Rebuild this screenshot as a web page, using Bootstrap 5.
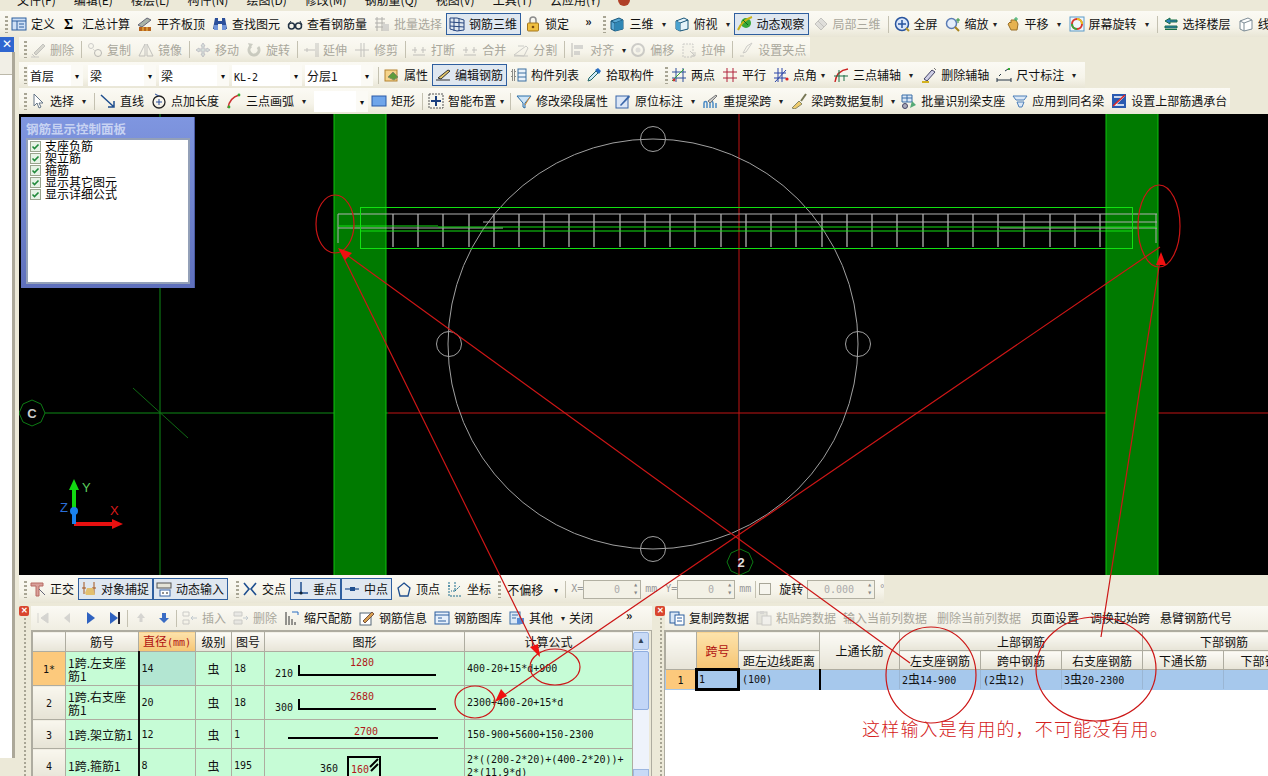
<!DOCTYPE html>
<html lang="zh"><head><meta charset="utf-8"><title>钢筋三维</title>
<link rel="stylesheet" href="https://cdn.jsdelivr.net/npm/bootstrap@5.3.0/dist/css/bootstrap.min.css">
<style>
html,body{margin:0;height:776px;overflow:hidden}
body{background:#ece9d8;font:12px/14px "Noto Sans CJK SC","Liberation Sans",sans-serif;color:#111}
.shell{width:1268px;height:776px;position:relative;overflow:hidden;background:#ece9d8}
.la{font-family:"DejaVu Sans Mono",monospace;font-size:10px}
.ph{font-size:12px;font-family:"Noto Sans CJK SC",sans-serif}
.menustrip{height:11px;overflow:hidden;white-space:nowrap;padding-left:17px;line-height:12px}
.menustrip span{display:inline-block;margin-top:-6px;margin-right:18px;vertical-align:top}
.menustrip .mdot{width:12px;height:12px;border-radius:50%;background:#b04028;margin-right:0}
.tbar{display:flex;align-items:center;white-space:nowrap;background:linear-gradient(#fbfaf4,#f6f4ea 60%,#e9e6d6);height:25px;overflow:hidden}
.t1{height:26px;padding-left:5px}
.t2{width:791px;padding-left:5px}
.t3{width:1066px;height:26px;padding-left:5px}
.t4{width:1211px;height:26px;padding-left:5px}
.t5{width:865px;height:28px;padding-left:5px}
.grip{width:3px;height:17px;margin-right:3px;flex:none;background:repeating-linear-gradient(#a8a594 0 2px,transparent 2px 4px)}
.t3>.grip:first-child{margin-right:1px}
.tl{display:flex;align-items:center;gap:4px;margin-right:7px;height:22px;flex:none}
.tl svg{width:16px;height:16px;flex:none}
.off{color:#a9a79c}
.off svg{opacity:.55}
.on{border:1px solid #2f5f9f;background:#dfe7f0;padding:0 3px 0 2px;margin-right:0}
.car{font-size:8px;width:12px;text-align:center;margin-left:-4px;margin-right:4px;flex:none;color:#222}
.t2 .car{margin-right:0}
.m2{margin-right:2px}
.sepv{width:1px;height:17px;background:#c4c1b1;margin:0 5px 0 0;flex:none}
.fld{background:#fff;height:21px;line-height:21px;padding-left:2px;width:58px;flex:none}
.w43{width:43px}.w56{width:56px}.w42{width:42px}.w46{width:46px;background:none;padding-left:3px}
.fldcar{width:12px;height:21px;line-height:21px;font-size:8px;text-align:center;flex:none;margin-right:3px;background:#fbfaf5}
.fldcar.m5{margin-right:5px}
.fldcar.clr{background:none}
.more{font-weight:700;font-size:12px;margin:-6px 12px 0 16px;flex:none}
.body-row{display:flex;height:739px}
.lcol{width:19px;flex:none}
.lclose{width:14px;height:15px;background:#2f66d0;color:#fff;font:12px/14px "Liberation Sans",sans-serif;text-align:center}
.lpane{width:15px;height:706px;background:#fff;border-right:3px solid #aca899}
.lpane div{height:23px;background:#f1efe6;border-bottom:1px solid #bcb9aa}
.rcol{width:1249px;flex:none}
.cad{height:461px;background:#000;position:relative;overflow:hidden}
.cad>svg{display:block}
.ctrl{position:absolute;left:2px;top:3px;width:174px;height:171px;background:linear-gradient(#7f96e0,#5f70bc);padding:5px 4px 4px 5px;border-right:1px solid #4a5aa4}
.ctrl h6{margin:0 0 2px;font:700 12.5px/14px "Noto Sans CJK SC",sans-serif;color:#c7d2f2;height:14px}
.ctrlbox{background:#fff;border:2px solid #93a0b8;height:146px;padding:0 0 0 2px}
.ckr{display:flex;align-items:center;gap:4px;height:12px;line-height:12px;color:#000}
.ckr svg{width:11px;height:11px;flex:none}
.spin{border:1px solid #b2b0a2;background:#f3f1e6;height:19px;width:58px;color:#aaa;text-align:right;padding-right:20px;line-height:17px;flex:none;font-family:"DejaVu Sans Mono",monospace;font-size:10px;position:relative}
.spin.wide{width:68px}
.spin::after{content:"▴\A▾";position:absolute;right:2px;top:0;font-size:8px;width:9px;line-height:8px;color:#888;white-space:pre}
.unit{font-family:"DejaVu Sans Mono",monospace;font-size:10px;width:12px;color:#999;flex:none}
.cbx{width:12px;height:12px;border:1px solid #a8a698;background:#f6f5ee;flex:none}
.sm3{margin-right:3px}
.lower{display:flex;height:173px;overflow:hidden}
.pnl{display:flex;flex:none;padding-top:3px}
.pl{width:633px}.pr{width:616px}
.gut{flex:none;position:relative}
.gl{width:12px}.gr{width:13px;padding-left:3px}
.gut i{display:block;width:10px;height:10px;background:#d9452f;border-radius:2px;color:#fff;font:700 8px/10px "Liberation Sans",sans-serif;text-align:center}
.gut b{display:block;width:2px;height:160px;margin:2px 0 0 5px;background:repeating-linear-gradient(#a8a594 0 2px,transparent 2px 4px)}
.pb{flex:1;min-width:0}
.ptb{height:24px;display:flex;align-items:center;white-space:nowrap;background:linear-gradient(#fbfaf4,#f0eee2);overflow:hidden}
.ptb .car{margin-right:0}
.ptb .more{margin-left:33px}
.ptb .m11{margin-right:11px}
.ptb .m9{margin-right:10px}
.grid{border-collapse:collapse;table-layout:fixed;margin:0;background:#fff;--bs-table-bg:transparent}
.grid th,.grid td{border:1px solid #aeaca0;padding:0 2px;font-weight:400;overflow:hidden;line-height:13px;vertical-align:middle}
.grid thead th{background:linear-gradient(#fcfbf6,#e7e4d7);text-align:center;color:#111}
.grid thead th.hot{background:linear-gradient(#fde3ac,#f6c574);color:#b01010}
.grid .rn{background:linear-gradient(#f9f7ee,#e6e3d5);text-align:center}
.grid .rn.hot{background:#fcc97c}
.lt{width:600px}
.lt td{background:#c6fcd6;color:#111}
.lt td.c{text-align:center}
.lt td.cur{background:#b3e6d2}
.lt td.bk{border-left:2px solid #111}
.lt .h20{height:20px}.lt .h34{height:34px}.lt .h29{height:29px}
.c31{width:31px}.c33{width:33px}.c36{width:36px}.c42{width:42px}.c57{width:57px}.c73{width:73px}.c80{width:80px}.c81{width:81px}.c82{width:82px}.c168{width:168px}.c200{width:200px}
.leftwrap{display:flex;height:147px;border:1px solid #aeaca0;border-bottom:0}
.sbar{width:16px;flex:none;background:#eef3fb;display:flex;flex-direction:column;gap:1px;padding:1px 0 0;position:relative}
.sbar i{display:block;height:18px;background:#c8daf6;border:1px solid #9db7e0;border-radius:2px;color:#345;font:normal 8px/16px "Liberation Sans",sans-serif;text-align:center}
.sbar u{display:block;height:59px;background:#c2d6f7;border:1px solid #8fadde;border-radius:2px}
.sbar em{position:absolute;bottom:0;left:0;width:16px;height:8px;background:#c8daf6;border:1px solid #9db7e0}
.rightwrap{height:147px;margin-left:-1px;border-left:1px solid #aeaca0;border-top:1px solid #aeaca0;overflow:hidden;background:#fff}
.rt{width:640px}
.rt td{background:#a6c8ec;height:20px;border-color:#a6c8ec;border-right-color:#9ab6d4;line-height:14px;white-space:nowrap}
.rt td.sel{border:3px solid #000;padding:0 1px}
.rt td.edge{border-right:2px solid #000}
.rt th{height:19px}
.over{position:absolute;left:0;top:0;pointer-events:none}
.redmsg{position:absolute;left:862px;top:718px;color:#d42020;font-size:18px;line-height:20px;letter-spacing:1.2px;white-space:nowrap;font-weight:300}
.dsvg{display:block}
.dsvg text{font-family:"DejaVu Sans Mono",monospace;font-size:10px;fill:#111}
.dsvg text.rd{fill:#b01818;text-anchor:middle}
</style></head><body>
<svg width="0" height="0" class="position-absolute"><defs>
<symbol id="def" viewBox="0 0 16 16"><rect x="1" y="2" width="14" height="12" fill="#cfe0f5" stroke="#2d5f9e"/><path d="M1 5h14M6 5v9M8 8h5M8 11h5" stroke="#2d5f9e" fill="none"/></symbol>
<symbol id="lev" viewBox="0 0 16 16"><path d="M1 9l9-7 4 2-9 7z" fill="#a9b4a8" stroke="#667"/><rect x="2" y="11" width="12" height="4" fill="#b8641c"/><path d="M6 11v4M10 11v4" stroke="#f4c64a"/></symbol>
<symbol id="bin" viewBox="0 0 16 16"><path d="M3 2h3v3h4V2h3l2 11h-5V8H6v5H1z" fill="#2b4f9a"/><rect x="2" y="9" width="4" height="5" fill="#6f93d8"/><rect x="10" y="9" width="4" height="5" fill="#6f93d8"/></symbol>
<symbol id="gls" viewBox="0 0 16 16"><circle cx="4.5" cy="10" r="3" fill="none" stroke="#234" stroke-width="1.5"/><circle cx="11.5" cy="10" r="3" fill="none" stroke="#234" stroke-width="1.5"/><path d="M1 9l3-4M7 10h2M15 9l-2-4" stroke="#234"/></symbol>
<symbol id="bat" viewBox="0 0 16 16"><path d="M1 3h10M1 7h10M1 11h10M3 1v14M8 1v14" stroke="#777" fill="none"/><rect x="9" y="8" width="6" height="7" fill="#bbb"/></symbol>
<symbol id="r3d" viewBox="0 0 16 16"><path d="M1 2l7 0 7 2v10l-7 1-7-2zM1 6l14 1M1 10l14 1M5 2v13M10 3v12" fill="none" stroke="#26457f"/></symbol>
<symbol id="lck" viewBox="0 0 16 16"><path d="M5 7V4a3 3 0 016 0v3" fill="none" stroke="#8c8c8c" stroke-width="1.5"/><rect x="2.500" y="7" width="11" height="8" rx="1" fill="#f0c040" stroke="#a4761a"/><circle cx="8" cy="11" r="1.300" fill="#7a4a10"/></symbol>
<symbol id="cub" viewBox="0 0 16 16"><path d="M2 5l8-3 4 2v9l-8 2-4-2z" fill="#58a8d4" stroke="#165478"/><path d="M2 5l4 2v8M6 7l8-3" fill="none" stroke="#165478"/><path d="M6 7l8-3v9l-8 2z" fill="#2f86b4"/></symbol>
<symbol id="cb2" viewBox="0 0 16 16"><path d="M2 5l8-3 4 2v9l-8 2-4-2z" fill="#e4f3fa" stroke="#165478"/><path d="M2 5l4 2v8M6 7l8-3" fill="none" stroke="#165478"/><path d="M2 5l4 2v8l-4-2z" fill="#4aa2cf"/></symbol>
<symbol id="orb" viewBox="0 0 16 16"><ellipse cx="9" cy="7" rx="5" ry="5" fill="#38a838"/><path d="M1 14C4 7 9 3 15 1" stroke="#c8b418" stroke-width="2" fill="none"/><path d="M6 4l5 5" stroke="#0c6a18"/></symbol>
<symbol id="dia" viewBox="0 0 16 16"><path d="M8 2l6 6-6 6-6-6z" fill="#ccc" stroke="#999"/><path d="M5 5l6 6" stroke="#999"/></symbol>
<symbol id="ful" viewBox="0 0 16 16"><circle cx="8" cy="8" r="6.500" fill="#dbe7fa" stroke="#29549e" stroke-width="1.500"/><path d="M8 4v8M4 8h8" stroke="#29549e" stroke-width="1.500"/><path d="M12 12l3 3" stroke="#b8962a" stroke-width="2"/></symbol>
<symbol id="zom" viewBox="0 0 16 16"><circle cx="6.500" cy="7.500" r="5" fill="#e4eefb" stroke="#5c7cb4" stroke-width="1.500"/><path d="M10 11l4 4" stroke="#a8841c" stroke-width="2"/><path d="M13 2v5M11 4h4" stroke="#2c8c3c"/></symbol>
<symbol id="pan" viewBox="0 0 16 16"><path d="M3 8l2-2 1 1V4h5l2 4-1 6H6z" fill="#e6b250" stroke="#99702a"/><path d="M11 1v4M9 3h4" stroke="#3a6"/></symbol>
<symbol id="rot" viewBox="0 0 16 16"><rect x="1" y="1" width="14" height="14" fill="#eef6fb" stroke="#5b9ac7"/><circle cx="8" cy="8" r="5" fill="none" stroke="#d8352a" stroke-width="2"/><path d="M3 8a5 5 0 005 5" stroke="#38a83c" stroke-width="2" fill="none"/><path d="M8 3a5 5 0 015 5" stroke="#e8c020" stroke-width="2" fill="none"/></symbol>
<symbol id="flr" viewBox="0 0 16 16"><path d="M2 5l5-3v2h7v2H7v2zM2 10h12v2H2zM2 13.500h12" stroke="#1a6f46" fill="#2d7fbf"/></symbol>
<symbol id="wir" viewBox="0 0 16 16"><path d="M2 5l8-3 4 2v9l-8 2-4-2zM2 5l4 2v8M6 7l8-3" fill="#fff" stroke="#7d8c96"/></symbol>
<symbol id="dlx" viewBox="0 0 16 16"><path d="M4 11L13 2l2 2-9 9z" fill="#bdbdb5" stroke="#999"/><path d="M1 15h8M2 12l3 3" stroke="#aaa"/></symbol>
<symbol id="cpy" viewBox="0 0 16 16"><circle cx="4" cy="4" r="2.500" fill="none" stroke="#aaa"/><circle cx="11" cy="11" r="3.500" fill="none" stroke="#888"/><path d="M6 7l2 2" stroke="#aaa" stroke-dasharray="1 1"/></symbol>
<symbol id="mir" viewBox="0 0 16 16"><path d="M7 2L1 14h6zM9 2l6 12H9z" fill="none" stroke="#999"/></symbol>
<symbol id="mov" viewBox="0 0 16 16"><path d="M8 1l2 3H9v3h3V6l3 2-3 2V9H9v3h1l-2 3-2-3h1V9H4v1L1 8l3-2v1h3V4H6z" fill="#bcc" stroke="#99a"/></symbol>
<symbol id="rtt" viewBox="0 0 16 16"><path d="M12 5a5 5 0 11-7-1" fill="none" stroke="#a8aba0" stroke-width="3"/><path d="M2 1l5 1-3 4z" fill="#a8aba0"/></symbol>
<symbol id="ext" viewBox="0 0 16 16"><path d="M1 8h11M4 6v4M13 1v14M15 1v14" fill="none" stroke="#999"/></symbol>
<symbol id="trm" viewBox="0 0 16 16"><path d="M1 8h14M7 1v14M10 1v14" fill="none" stroke="#999"/></symbol>
<symbol id="brk" viewBox="0 0 16 16"><path d="M1 8h5M10 8h5M4 5v6M12 5v6M2 13h12" fill="none" stroke="#999"/></symbol>
<symbol id="spl" viewBox="0 0 16 16"><path d="M1 13L13 4l2 2-4 8zM5 4h6M1 14h14" fill="none" stroke="#aaa"/></symbol>
<symbol id="aln" viewBox="0 0 16 16"><path d="M2 1v14" stroke="#888"/><rect x="4" y="3" width="9" height="4" fill="#bbb"/><rect x="4" y="9" width="6" height="4" fill="#bbb"/></symbol>
<symbol id="ofs" viewBox="0 0 16 16"><circle cx="8" cy="8" r="6" fill="none" stroke="#aaa" stroke-width="2"/><circle cx="8" cy="8" r="2.500" fill="#ccc"/></symbol>
<symbol id="str" viewBox="0 0 16 16"><path d="M2 2h10v13H2z" fill="#f4f2e8" stroke="#aaa" stroke-dasharray="2 1"/><path d="M9 9l5 5M10 14h4v-4" fill="none" stroke="#aaa"/></symbol>
<symbol id="grp" viewBox="0 0 16 16"><path d="M2 14h4M9 4l5-3-6 9-3 1z" fill="none" stroke="#aaa"/></symbol>
<symbol id="pty" viewBox="0 0 16 16"><rect x="1" y="3" width="12" height="11" fill="#f5d48a" stroke="#b48230"/><path d="M4 10l5-5 5 5-4 3z" fill="#5d9c3c" stroke="#886"/></symbol>
<symbol id="edt" viewBox="0 0 16 16"><path d="M1 13h14M3 11L13 3l2 1-9 8z" fill="#e6c86a" stroke="#333"/></symbol>
<symbol id="lst" viewBox="0 0 16 16"><path d="M1 3h3v3H1zM1 8h3v3H1zM1 13h3" fill="none" stroke="#222" stroke-dasharray="1 1"/><rect x="7" y="2" width="8" height="12" fill="#eaf2fa" stroke="#3b6ea0"/><path d="M7 6h8M7 10h8" stroke="#3b6ea0"/></symbol>
<symbol id="pip" viewBox="0 0 16 16"><path d="M2 14l1-3 7-7 2 2-7 7z" fill="#cfe8f8" stroke="#266"/><path d="M9 3l3-2 3 3-2 3z" fill="#2a6ec2"/></symbol>
<symbol id="twp" viewBox="0 0 16 16"><path d="M1 5h14M1 11h14M5 1v14M12 1v14" stroke="#2d4f9a" fill="none"/><path d="M1 14L13 2" stroke="#3a3"/><circle cx="3" cy="13" r="1.400" fill="#c33"/></symbol>
<symbol id="par" viewBox="0 0 16 16"><path d="M1 5h14M1 11h14M5 1v14M11 1v14" stroke="#b0223a" fill="none"/></symbol>
<symbol id="ang" viewBox="0 0 16 16"><path d="M1 6h12M1 11h12M5 1v14M9 1v14M2 15L13 3" stroke="#2a44a8" fill="none"/><circle cx="14" cy="12" r="1.600" fill="#d22"/></symbol>
<symbol id="arc" viewBox="0 0 16 16"><path d="M2 15C3 7 8 3 15 2" stroke="#c22" fill="none" stroke-width="1.400"/><path d="M1 9h14M6 15V3M11 8v6" stroke="#1a6f46" fill="none"/></symbol>
<symbol id="dax" viewBox="0 0 16 16"><path d="M3 12l8-9 3 2-8 9z" fill="#cfcfe6" stroke="#446"/><path d="M1 15h7" stroke="#d3b21e" stroke-width="2"/><path d="M13 1l2 2" stroke="#777"/></symbol>
<symbol id="dim" viewBox="0 0 16 16"><path d="M1 13h14M1 11v4M15 11v4M3 9l2-2M9 4l3-2" stroke="#234" fill="none"/><rect x="12" y="1" width="2" height="2" fill="#3a3"/></symbol>
<symbol id="arw" viewBox="0 0 16 16"><path d="M4 1v12l3-3 2 5 2-1-2-4h4z" fill="#fff" stroke="#678"/></symbol>
<symbol id="lin" viewBox="0 0 16 16"><path d="M1 2l13 12M14 8v6H8" fill="none" stroke="#1f4f8f" stroke-width="1.500"/></symbol>
<symbol id="ptl" viewBox="0 0 16 16"><circle cx="8" cy="9" r="6" fill="none" stroke="#222" stroke-width="1.300"/><path d="M8 6v6M5 9h6M4 1l4 2" stroke="#2a4f9a"/></symbol>
<symbol id="tpa" viewBox="0 0 16 16"><path d="M2 15C3 8 6 4 13 2" stroke="#c33" stroke-width="1.600" fill="none"/><circle cx="3" cy="14" r="1.400" fill="#3a3"/><circle cx="13" cy="2" r="1.400" fill="#3a3"/></symbol>
<symbol id="rct" viewBox="0 0 16 16"><rect x="1" y="3" width="14" height="10" fill="#6fa5ea" stroke="#2a5aa8"/></symbol>
<symbol id="sma" viewBox="0 0 16 16"><rect x="1" y="1" width="14" height="14" fill="#f6f6ee" stroke="#555" stroke-dasharray="2 1"/><path d="M8 3v10M3 8h10" stroke="#1a3f7f" stroke-width="2"/></symbol>
<symbol id="fnl" viewBox="0 0 16 16"><path d="M1 3h14l-6 7v5l-2-1v-4z" fill="#cde4f6" stroke="#2a6ea8"/><path d="M9 12l5-8" stroke="#c83"/></symbol>
<symbol id="pos" viewBox="0 0 16 16"><rect x="1" y="3" width="12" height="12" fill="#dbe6f6" stroke="#3a66a8"/><path d="M5 12L14 2l1 2-9 9z" fill="#3a66a8"/></symbol>
<symbol id="rep" viewBox="0 0 16 16"><path d="M1 15V10c0-2 3-2 3 0v5M7 15v-5c0-2 3-2 3 0v5M13 15v-5" fill="none" stroke="#4a8ac4" stroke-width="1.500"/><path d="M5 8l8-6 1 1-7 7z" fill="#ccc" stroke="#777"/></symbol>
<symbol id="brs" viewBox="0 0 16 16"><path d="M1 15l7-7 3 3-7 5z" fill="#eecb6c" stroke="#886"/><path d="M10 8l5-7" stroke="#775" stroke-width="2"/></symbol>
<symbol id="bid" viewBox="0 0 16 16"><path d="M1 2h10v7H1z" fill="#dbe8f6" stroke="#3a6ea8"/><path d="M1 5h10M6 2v7" stroke="#3a6ea8"/><path d="M9 15l2-7 4 4z" fill="#5a7"/><circle cx="4" cy="13" r="2.500" fill="#aab" stroke="#446"/></symbol>
<symbol id="app" viewBox="0 0 16 16"><path d="M1 3h14l-3 4H4zM5 9h7l-2 5H7z" fill="#dbe8f6" stroke="#4c7eb8"/></symbol>
<symbol id="set" viewBox="0 0 16 16"><rect x="1" y="1" width="14" height="14" fill="#2a5ab0"/><path d="M3 4h9L4 12h9" stroke="#fff" stroke-width="1.600" fill="none"/><path d="M2 13L14 2" stroke="#d22" stroke-width="1.500"/></symbol>
<symbol id="ort" viewBox="0 0 16 16"><path d="M1 2h12v3H9v10H6V5H1z" fill="#d8a09a" stroke="#b86a62"/><path d="M9 8l6 6" stroke="#667"/></symbol>
<symbol id="snp" viewBox="0 0 16 16"><path d="M3 1v12M13 1v12M1 7h4M11 7h4" stroke="#a4541c" fill="none"/><path d="M4 12l2-5h6l2 7H5z" fill="#e2c070"/></symbol>
<symbol id="dyn" viewBox="0 0 16 16"><rect x="1" y="2" width="14" height="5" fill="#e4e4d8" stroke="#555"/><rect x="4" y="9" width="10" height="6" fill="#fff" stroke="#3a66a8"/><path d="M6 12h2M10 12h2" stroke="#222"/></symbol>
<symbol id="xpt" viewBox="0 0 16 16"><path d="M2 2l5 6-5 6M14 2L9 8l5 6" fill="none" stroke="#1f4f8f" stroke-width="1.600"/></symbol>
<symbol id="ppt" viewBox="0 0 16 16"><path d="M1 12h14M8 1v11" stroke="#1f4f8f" stroke-width="1.500"/><circle cx="8" cy="12" r="1.600" fill="#123"/></symbol>
<symbol id="mpt" viewBox="0 0 16 16"><path d="M1 8h14" stroke="#1f4f8f" stroke-width="1.200"/><rect x="6" y="6" width="5" height="4" fill="#1f4f8f"/></symbol>
<symbol id="vpt" viewBox="0 0 16 16"><path d="M8 2l6 5-2 8H4L2 7z" fill="none" stroke="#1f4f8f" stroke-width="1.300"/></symbol>
<symbol id="cpt" viewBox="0 0 16 16"><path d="M2 1v14h13M8 1v9l5-5M1 5h3M8 10H4" fill="none" stroke="#1f6f8f" stroke-dasharray="2 1"/></symbol>
<symbol id="fst" viewBox="0 0 16 16"><path d="M3 3v10M13 3v10L6 8z" fill="#bbb" stroke="#bbb"/></symbol>
<symbol id="prv" viewBox="0 0 16 16"><path d="M11 3v10L5 8z" fill="#bbb"/></symbol>
<symbol id="nxt" viewBox="0 0 16 16"><path d="M4 2v12l8-6z" fill="#2f62c0"/></symbol>
<symbol id="lst2" viewBox="0 0 16 16"><path d="M3 2v12l8-6z" fill="#2f62c0"/><path d="M12 2v12" stroke="#223" stroke-width="2"/></symbol>
<symbol id="up" viewBox="0 0 16 16"><path d="M8 3l4 5H9.500v4h-3V8H4z" fill="#bbb"/></symbol>
<symbol id="dn" viewBox="0 0 16 16"><path d="M8 13l5-5h-3V3H6v5H3z" fill="#3a6cc4"/></symbol>
<symbol id="ins" viewBox="0 0 16 16"><path d="M1 2h6v4H1zM1 10h6v4H1z" fill="none" stroke="#aaa"/><path d="M15 8H9M11 6l-2 2 2 2" stroke="#9ab" fill="none"/></symbol>
<symbol id="dl2" viewBox="0 0 16 16"><path d="M1 2h8v4H1zM1 10h8v4H1z" fill="#ddd" stroke="#aaa"/><path d="M10 8h5M13 6l2 2-2 2" stroke="#9ab" fill="none"/></symbol>
<symbol id="scl" viewBox="0 0 16 16"><path d="M2 2v13M5 6v9M8 9v6M11 12v3" stroke="#333"/><path d="M8 2h6v3" stroke="#2a6ec2" fill="none"/></symbol>
<symbol id="inf" viewBox="0 0 16 16"><rect x="1" y="3" width="11" height="12" fill="#fff" stroke="#567"/><path d="M4 11L13 2l2 2-9 9z" fill="#d8a050" stroke="#754"/></symbol>
<symbol id="lib" viewBox="0 0 16 16"><rect x="1" y="2" width="14" height="12" fill="#e6f0fb" stroke="#2d5f9e"/><path d="M1 5h14M4 8h4M4 11h8" stroke="#2d5f9e"/></symbol>
<symbol id="oth" viewBox="0 0 16 16"><rect x="1" y="2" width="10" height="12" fill="#dbe8f6" stroke="#3a6ea8"/><rect x="8" y="8" width="7" height="6" fill="#5a8cd4"/><path d="M3 5h6M3 8h4" stroke="#3a6ea8"/></symbol>
<symbol id="cp2" viewBox="0 0 16 16"><rect x="1" y="2" width="9" height="11" fill="#dbe8f6" stroke="#2d5f9e"/><rect x="6" y="5" width="9" height="10" fill="#fff" stroke="#2d5f9e"/><path d="M8 8h5M8 11h5" stroke="#2d5f9e"/></symbol>
<symbol id="pst" viewBox="0 0 16 16"><rect x="1" y="2" width="10" height="12" fill="#d8d8d0" stroke="#aaa"/><rect x="6" y="6" width="9" height="9" fill="#eee" stroke="#aaa"/><rect x="4" y="1" width="4" height="3" fill="#bbb"/></symbol>
<symbol id="tck" viewBox="0 0 11 11"><rect x=".5" y=".5" width="10" height="10" fill="#e6f3e6" stroke="#9aa58e"/><path d="M2.500 5.500l2 2 4-4" fill="none" stroke="#1f8a3a" stroke-width="1.600"/></symbol>
</defs></svg>

<div class="shell">
<div class="menustrip"><span>文件(F)</span><span>编辑(E)</span><span>楼层(L)</span><span>构件(N)</span><span>绘图(D)</span><span>修改(M)</span><span>钢筋量(Q)</span><span>视图(V)</span><span>工具(T)</span><span>云应用(Y)</span><span class="mdot"></span></div>

<div class="tbar t1">
<span class="grip"></span>
<span class="tl"><svg><use href="#def"/></svg>定义</span>
<span class="tl"><svg><text x="2" y="13" font-family="Liberation Serif" font-weight="700" font-size="14">Σ</text></svg>汇总计算</span>
<span class="tl"><svg><use href="#lev"/></svg>平齐板顶</span>
<span class="tl"><svg><use href="#bin"/></svg>查找图元</span>
<span class="tl"><svg><use href="#gls"/></svg>查看钢筋量</span>
<span class="tl off me-1"><svg><use href="#bat"/></svg>批量选择</span>
<span class="tl on me-1"><svg><use href="#r3d"/></svg>钢筋三维</span>
<span class="tl me-0"><svg><use href="#lck"/></svg>锁定</span>
<span class="more">»</span>
<span class="grip"></span>
<span class="tl me-2"><svg><use href="#cub"/></svg>三维</span><span class="car">▾</span>
<span class="tl me-2"><svg><use href="#cb2"/></svg>俯视</span><span class="car me-0">▾</span>
<span class="tl on"><svg><use href="#orb"/></svg>动态观察</span>
<span class="tl off ms-1"><svg><use href="#dia"/></svg>局部三维</span>
<span class="sepv"></span>
<span class="tl"><svg><use href="#ful"/></svg>全屏</span>
<span class="tl me-1"><svg><use href="#zom"/></svg>缩放</span><span class="car">▾</span>
<span class="tl me-2"><svg><use href="#pan"/></svg>平移</span><span class="car">▾</span>
<span class="tl me-2"><svg><use href="#rot"/></svg>屏幕旋转</span><span class="car">▾</span>
<span class="sepv"></span>
<span class="tl"><svg><use href="#flr"/></svg>选择楼层</span>
<span class="tl"><svg><use href="#wir"/></svg>线框</span>
</div>

<div class="body-row">
<div class="lcol"><div class="lclose">✕</div><div class="lpane"><div></div></div></div>
<div class="rcol">

<div class="tbar t2 off">
<span class="grip"></span>
<span class="tl"><svg><use href="#dlx"/></svg>删除</span><span class="sepv"></span>
<span class="tl"><svg><use href="#cpy"/></svg>复制</span>
<span class="tl"><svg><use href="#mir"/></svg>镜像</span><span class="sepv"></span>
<span class="tl"><svg><use href="#mov"/></svg>移动</span>
<span class="tl"><svg><use href="#rtt"/></svg>旋转</span><span class="sepv"></span>
<span class="tl"><svg><use href="#ext"/></svg>延伸</span>
<span class="tl"><svg><use href="#trm"/></svg>修剪</span><span class="sepv"></span>
<span class="tl"><svg><use href="#brk"/></svg>打断</span>
<span class="tl"><svg><use href="#brk"/></svg>合并</span>
<span class="tl"><svg><use href="#spl"/></svg>分割</span><span class="sepv"></span>
<span class="tl me-2"><svg><use href="#aln"/></svg>对齐</span><span class="car">▾</span>
<span class="tl"><svg><use href="#ofs"/></svg>偏移</span>
<span class="tl"><svg><use href="#str"/></svg>拉伸</span><span class="sepv"></span>
<span class="tl"><svg><use href="#grp"/></svg>设置夹点</span>
</div>

<div class="tbar t3">
<span class="grip"></span>
<span class="fld w43">首层</span><span class="fldcar m5">▾</span>
<span class="fld w56">梁</span><span class="fldcar">▾</span>
<span class="fld">梁</span><span class="fldcar">▾</span>
<span class="fld"><span class="la">KL-2</span></span><span class="fldcar">▾</span>
<span class="fld w56">分层1</span><span class="fldcar m5">▾</span>
<span class="sepv"></span>
<span class="tl me-1"><svg><use href="#pty"/></svg>属性</span>
<span class="tl on me-1"><svg><use href="#edt"/></svg>编辑钢筋</span>
<span class="tl"><svg><use href="#lst"/></svg>构件列表</span>
<span class="tl"><svg><use href="#pip"/></svg>拾取构件</span>
<span class="grip ms-1"></span>
<span class="tl"><svg><use href="#twp"/></svg>两点</span>
<span class="tl"><svg><use href="#par"/></svg>平行</span>
<span class="tl me-1"><svg><use href="#ang"/></svg>点角</span><span class="car">▾</span>
<span class="tl me-2"><svg><use href="#arc"/></svg>三点辅轴</span><span class="car">▾</span>
<span class="tl"><svg><use href="#dax"/></svg>删除辅轴</span>
<span class="tl me-2"><svg><use href="#dim"/></svg>尺寸标注</span><span class="car">▾</span>
</div>

<div class="tbar t4">
<span class="grip"></span>
<span class="tl me-2"><svg><use href="#arw"/></svg>选择</span><span class="car">▾</span><span class="sepv"></span>
<span class="tl"><svg><use href="#lin"/></svg>直线</span>
<span class="tl"><svg><use href="#ptl"/></svg>点加长度</span>
<span class="tl me-2"><svg><use href="#tpa"/></svg>三点画弧</span><span class="car">▾</span>
<span class="fld w42"></span><span class="fldcar">▾</span>
<span class="tl"><svg><use href="#rct"/></svg>矩形</span><span class="sepv"></span>
<span class="tl me-1"><svg><use href="#sma"/></svg>智能布置</span><span class="car m2">▾</span><span class="sepv"></span>
<span class="tl"><svg><use href="#fnl"/></svg>修改梁段属性</span>
<span class="tl me-2"><svg><use href="#pos"/></svg>原位标注</span><span class="car">▾</span>
<span class="tl me-2"><svg><use href="#rep"/></svg>重提梁跨</span><span class="car">▾</span>
<span class="tl me-2"><svg><use href="#brs"/></svg>梁跨数据复制</span><span class="car m2">▾</span>
<span class="tl"><svg><use href="#bid"/></svg>批量识别梁支座</span>
<span class="tl"><svg><use href="#app"/></svg>应用到同名梁</span>
<span class="tl"><svg><use href="#set"/></svg>设置上部筋遇承台</span>
</div>

<div class="cad">
<svg width="1249" height="461" viewBox="19 114 1249 461">
<path d="M160 114v461M19 413h369" stroke="#0e8a16" fill="none"/>
<path d="M133 388l55 50" stroke="#0f6a14"/>
<path d="M739 114v461M388 413h880" stroke="#c01414"/>
<rect x="334" y="114" width="52" height="461" fill="#007a00"/>
<rect x="1106" y="114" width="52" height="461" fill="#007a00"/>
<path d="M334 114v461M386 114v461M1106 114v461M1158 114v461" stroke="#0fc30f"/>
<g fill="none" stroke="#a0a0a0"><circle cx="653" cy="344" r="205"/><circle cx="653" cy="139" r="12.500"/><circle cx="449" cy="344" r="12.500"/><circle cx="858" cy="344" r="12.500"/><circle cx="653" cy="549" r="12.500"/></g>
<path d="M338 214h819M338 214v29M1156 214v29M483 222h674M338 228h165M1000 228h157" stroke="#b0b0b0" fill="none"/>
<path d="M393 214v33M418 214v33M443 214v33M469 214v33M494 214v33M519 214v33M544 214v33M569 214v33M594 214v33M620 214v33M645 214v33M670 214v33M695 214v33M721 214v33M746 214v33M771 214v33M796 214v33M822 214v33M847 214v33M872 214v33M897 214v33M923 214v33M948 214v33M973 214v33M998 214v33M1024 214v33M1050 214v33M1075 214v33M1100 214v33" stroke="#b0b0b0" stroke-width="1.300"/>
<rect x="360.500" y="207.500" width="772" height="41" fill="none" stroke="#12e012"/>
<path d="M338 226h100M438 227h719M360 231h773" stroke="#12e012"/>
<path d="M32 400l9 4 4 9-4 9-9 4-9-4-4-9 4-9z" fill="#000" stroke="#0d7a14"/>
<text x="32" y="418" text-anchor="middle" font-family="Liberation Sans" font-weight="700" font-size="13" fill="#ccc">C</text>
<path d="M740 549l9 4 4 9-4 9-9 4-9-4-4-9 4-9z" fill="#000" stroke="#0d7a14"/>
<path d="M739 530v45" stroke="#c01414"/>
<text x="741" y="567" text-anchor="middle" font-family="Liberation Sans" font-weight="700" font-size="13" fill="#ddd">2</text>
<path d="M74 524v-34" stroke="#12d812" stroke-width="4"/><path d="M74 479l-5 11h10z" fill="#12d812"/>
<path d="M74 524h39" stroke="#e81010" stroke-width="4"/><path d="M123 524l-11-5v10z" fill="#e81010"/>
<circle cx="74" cy="511" r="4" fill="#1a82ec"/><path d="M74 511v13" stroke="#1a82ec" stroke-width="4"/>
<text x="82" y="492" font-family="Liberation Sans" font-size="13" fill="#5ccf5c">Y</text>
<text x="110" y="515" font-family="Liberation Sans" font-size="13" fill="#d81a1a">X</text>
<text x="60" y="512" font-family="Liberation Sans" font-size="13" fill="#2a6ed8">Z</text>
</svg>
<div class="ctrl"><h6>钢筋显示控制面板</h6>
<div class="ctrlbox">
<div class="ckr"><svg><use href="#tck"/></svg>支座负筋</div>
<div class="ckr"><svg><use href="#tck"/></svg>架立筋</div>
<div class="ckr"><svg><use href="#tck"/></svg>箍筋</div>
<div class="ckr"><svg><use href="#tck"/></svg>显示其它图元</div>
<div class="ckr"><svg><use href="#tck"/></svg>显示详细公式</div>
</div></div>
</div>

<div class="tbar t5">
<span class="grip"></span>
<span class="tl me-1"><svg><use href="#ort"/></svg>正交</span>
<span class="tl on"><svg><use href="#snp"/></svg>对象捕捉</span>
<span class="tl on"><svg><use href="#dyn"/></svg>动态输入</span>
<span class="grip ms-2"></span>
<span class="tl me-1"><svg><use href="#xpt"/></svg>交点</span>
<span class="tl on"><svg><use href="#ppt"/></svg>垂点</span>
<span class="tl on me-1"><svg><use href="#mpt"/></svg>中点</span>
<span class="tl"><svg><use href="#vpt"/></svg>顶点</span>
<span class="tl"><svg><use href="#cpt"/></svg>坐标</span>
<span class="grip"></span>
<span class="fld w46">不偏移</span><span class="fldcar clr">▾</span>
<span class="sepv"></span>
<span class="unit">X=</span><span class="spin">0</span><span class="unit ms-1">mm</span>
<span class="unit ms-2">Y=</span><span class="spin">0</span><span class="unit ms-1">mm</span>
<span class="sepv ms-1 sm3"></span>
<span class="cbx"></span>
<span class="ms-2 me-1">旋转</span><span class="spin wide">0.000</span><span class="unit ms-1">°</span>
</div>

<div class="lower">
<div class="pnl pl">
<div class="gut gl"><i>✕</i><b></b></div>
<div class="pb">
<div class="ptb">
<span class="tl ms-1 off me-2"><svg><use href="#fst"/></svg></span>
<span class="tl off me-2"><svg><use href="#prv"/></svg></span>
<span class="tl me-2"><svg><use href="#nxt"/></svg></span>
<span class="tl me-1"><svg><use href="#lst2"/></svg></span>
<span class="sepv"></span>
<span class="tl off"><svg><use href="#up"/></svg></span>
<span class="tl me-1"><svg><use href="#dn"/></svg></span>
<span class="sepv"></span>
<span class="tl off"><svg><use href="#ins"/></svg>插入</span>
<span class="tl off"><svg><use href="#dl2"/></svg>删除</span>
<span class="tl"><svg><use href="#scl"/></svg>缩尺配筋</span>
<span class="tl"><svg><use href="#inf"/></svg>钢筋信息</span>
<span class="tl"><svg><use href="#lib"/></svg>钢筋图库</span>
<span class="tl me-2"><svg><use href="#oth"/></svg>其他</span><span class="car">▾</span>
<span class="tl me-0">关闭</span>
<span class="more">»</span>
</div>
<div class="leftwrap">
<table class="grid lt">
<colgroup><col class="c33"><col class="c73"><col class="c57"><col class="c36"><col class="c33"><col class="c200"><col class="c168"></colgroup>
<thead><tr class="h20"><th></th><th>筋号</th><th class="hot">直径<span class="la">(mm)</span></th><th>级别</th><th>图号</th><th>图形</th><th>计算公式</th></tr></thead>
<tbody>
<tr class="h34"><td class="rn hot"><span class="la">1*</span></td><td>1跨.左支座筋1</td><td class="cur bk la">14</td><td class="c">虫</td><td class="la">18</td>
<td class="p-0"><svg width="200" height="33" class="dsvg"><text x="10" y="25">210</text><path d="M34 13v10h137" fill="none" stroke="#000" stroke-width="2"/><text class="rd" x="97" y="14">1280</text></svg></td><td class="la">400-20+15*d+900</td></tr>
<tr class="h34"><td class="rn"><span class="la">2</span></td><td>1跨.右支座筋1</td><td class="bk la">20</td><td class="c">虫</td><td class="la">18</td>
<td class="p-0"><svg width="200" height="33" class="dsvg"><text x="10" y="25">300</text><path d="M34 13v10h137" fill="none" stroke="#000" stroke-width="2"/><text class="rd" x="97" y="14">2680</text></svg></td><td class="la">2300+400-20+15*d</td></tr>
<tr class="h29"><td class="rn"><span class="la">3</span></td><td>1跨.架立筋1</td><td class="bk la">12</td><td class="c">虫</td><td class="la">1</td>
<td class="p-0"><svg width="200" height="28" class="dsvg"><path d="M23 18h150" stroke="#000" stroke-width="2"/><text class="rd" x="101" y="15">2700</text></svg></td><td class="la">150-900+5600+150-2300</td></tr>
<tr class="h34"><td class="rn"><span class="la">4</span></td><td>1跨.箍筋1</td><td class="bk la">8</td><td class="c">虫</td><td class="la">195</td>
<td class="p-0"><svg width="200" height="33" class="dsvg"><text x="55" y="23">360</text><path d="M83 33V8h32v25M113 10l-8 8M113 15l-7 7" fill="none" stroke="#000" stroke-width="2"/><text class="rd" x="95" y="24">160</text></svg></td><td class="la">2*((200-2*20)+(400-2*20))+<br>2*(11.9*d)</td></tr>
</tbody></table>
<div class="sbar"><i>▲</i><u></u><em></em></div>
</div>
</div>
</div>

<div class="pnl pr">
<div class="gut gr"><i>✕</i><b></b></div>
<div class="pb">
<div class="ptb">
<span class="tl ms-1"><svg><use href="#cp2"/></svg>复制跨数据</span>
<span class="tl off"><svg><use href="#pst"/></svg>粘贴跨数据</span>
<span class="tl off m9">输入当前列数据</span>
<span class="tl off m9">删除当前列数据</span>
<span class="tl m11">页面设置</span>
<span class="tl m9">调换起始跨</span>
<span class="tl">悬臂钢筋代号</span>
</div>
<div class="rightwrap">
<table class="grid rt">
<colgroup><col class="c31"><col class="c42"><col class="c81"><col class="c80"><col class="c81"><col class="c81"><col class="c81"><col class="c81"><col class="c82"></colgroup>
<thead>
<tr><th rowspan="2"></th><th rowspan="2" class="hot">跨号</th><th></th><th rowspan="2">上通长筋</th><th colspan="3">上部钢筋</th><th colspan="2">下部钢筋</th></tr>
<tr><th>距左边线距离</th><th>左支座钢筋</th><th>跨中钢筋</th><th>右支座钢筋</th><th>下通长筋</th><th>下部钢筋</th></tr>
</thead>
<tbody><tr><td class="rn hot"><span class="la">1</span></td><td class="sel la">1</td><td class="edge la">(100)</td><td></td><td class="la">2<span class="ph">虫</span>14-900</td><td class="la">(2<span class="ph">虫</span>12)</td><td class="la">3<span class="ph">虫</span>20-2300</td><td></td><td></td></tr></tbody>
</table>
</div>
</div>
</div>
</div>

</div>
</div>

<svg class="over" width="1268" height="776" viewBox="0 0 1268 776" fill="none" stroke="#cc1616" stroke-width="1.200">
<ellipse cx="335" cy="224" rx="19" ry="29"/>
<ellipse cx="1159" cy="226" rx="21" ry="41"/>
<ellipse cx="555" cy="667" rx="25" ry="18"/>
<ellipse cx="475" cy="702" rx="20" ry="16"/>
<ellipse cx="931" cy="675" rx="45" ry="48"/>
<ellipse cx="1096" cy="669" rx="60" ry="52"/>
<path d="M910 663L340 250M340 250L539 655M1101 637L1161 254M1160 247L497 700"/>
<g fill="#f01010" stroke="none">
<path d="M338 248l14 5-7 7z"/>
<path d="M1161 252l5 13h-10z"/>
<path d="M540 657l-10-10 8-3z"/>
<path d="M495 702l6-13 6 7z"/>
</g>
</svg>
<div class="redmsg">这样输入是有用的，不可能没有用。</div>
</div>
<script src="https://cdn.jsdelivr.net/npm/bootstrap@5.3.0/dist/js/bootstrap.bundle.min.js"></script>
</body></html>
